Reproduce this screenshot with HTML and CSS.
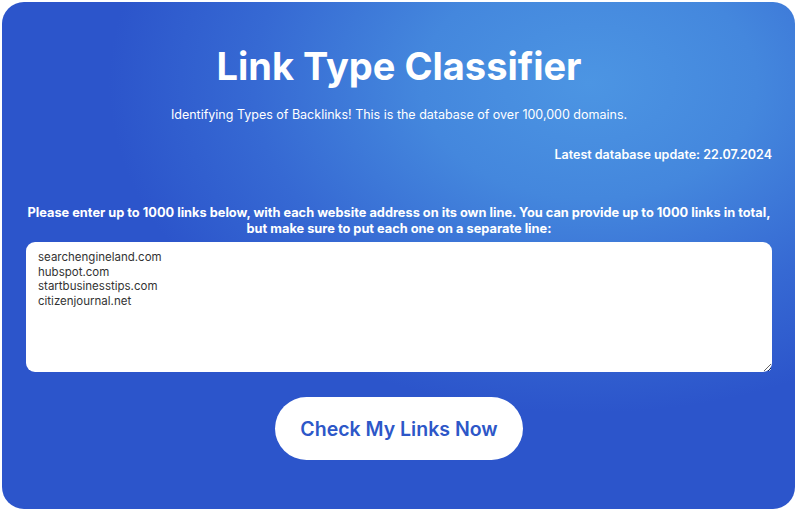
FILE: index.html
```html
<!DOCTYPE html>
<html lang="en">
<head>
    <meta charset="UTF-8">
    <meta name="viewport" content="width=device-width, initial-scale=1.0">
    <title>Link Type Classifier</title>
    <link rel="stylesheet" href="styles.css">
</head>
<body>

    <form class="card" autocomplete="off">
        <h1 class="title">Link Type Classifier</h1>
        <p class="subtitle">Identifying Types of Backlinks! This is the database of over 100,000 domains.</p>
        <p class="updated">Latest database update: 22.07.2024</p>
        <p class="hint">Please enter up to 1000 links below, with each website address on its own line. You can provide up to 1000 links in total, but make sure to put each one on a separate line:</p>
        <textarea class="links" name="links">searchengineland.com
hubspot.com
startbusinesstips.com
citizenjournal.net</textarea>
        <button type="button" class="check">Check My Links Now</button>
    </form>

</body>
</html>
```

FILE: styles.css
```css
* {
    margin: 0;
    padding: 0;
    box-sizing: border-box;
    font-family: Inter, "Open Sans", sans-serif;
}
body {
    background-color: #fff;
    padding: 2px 5px 2px 2px;
}
.card {
    height: 507px;
    border-radius: 22px;
    padding: 0 23px 0 24px;
    display: flex;
    flex-direction: column;
    align-items: center;
    color: #fff;
    background-color: #2c55cb;
    background-image: radial-gradient(ellipse 480px 330px at 74% 16%, #4c95e3 0%, #4487dd 35%, #3669d3 70%, rgba(44, 85, 203, 0) 100%);
}
.title {
    margin-top: 40px;
    font-size: 38px;
    font-weight: 700;
    letter-spacing: 0;
    line-height: 48px;
}
.subtitle {
    margin-top: 17px;
    font-size: 12.5px;
    font-weight: 400;
    line-height: 16px;
}
.updated {
    align-self: flex-end;
    margin-top: 24px;
    font-size: 12.5px;
    font-weight: 600;
    line-height: 16px;
}
.hint {
    margin-top: 42px;
    font-size: 12.8px;
    font-weight: 700;
    line-height: 15.5px;
    text-align: center;
}
.links {
    width: 100%;
    height: 130px;
    margin-top: 6px;
    border: none;
    border-radius: 9px;
    padding: 8px 12px;
    font-size: 11.5px;
    line-height: 14.5px;
    color: #333;
    background-color: #fff;
    outline: none;
}
.check {
    margin-top: 25px;
    width: 248px;
    height: 63px;
    border: none;
    border-radius: 32px;
    background-color: #fff;
    color: #2d57c8;
    font-size: 19.5px;
    font-weight: 600;
    cursor: pointer;
}
```
